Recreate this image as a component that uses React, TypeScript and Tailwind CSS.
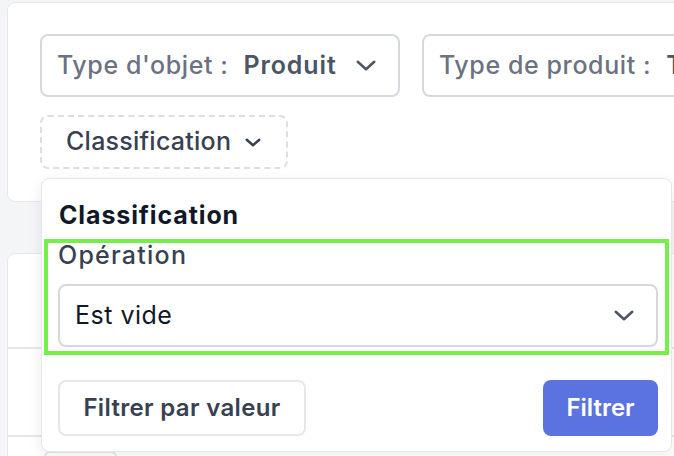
import React from "react";

function Chevron({ w = 20, h = 11, stroke = 2.5, color = "#4b5563" }: { w?: number; h?: number; stroke?: number; color?: string }) {
  return (
    <svg width={w} height={h} viewBox={`0 0 ${w} ${h}`} fill="none" className="shrink-0">
      <polyline
        points={`${stroke / 2 + 0.5},${stroke / 2 + 0.5} ${w / 2},${h - stroke / 2 - 0.5} ${w - stroke / 2 - 0.5},${stroke / 2 + 0.5}`}
        stroke={color}
        strokeWidth={stroke}
        strokeLinecap="round"
        strokeLinejoin="round"
      />
    </svg>
  );
}

function FilterSelect({ label, value, width }: { label: string; value: string; width: string }) {
  return (
    <div className={`${width} h-[63px] shrink-0 flex items-center overflow-hidden rounded-[8px] border-2 border-[#d5d8de] bg-white pl-[15px] pr-[21px]`}>
      <span className="text-[25px] tracking-[0.024em] font-medium text-[#6b7280] whitespace-nowrap">{label}</span>
      <span className="ml-[15px] text-[25px] tracking-[0.035em] font-semibold text-[#4b5563] whitespace-nowrap">{value}</span>
      <span className="ml-[19px]">
        <Chevron />
      </span>
    </div>
  );
}

export default function App() {
  return (
    <div className="relative w-[674px] h-[456px] overflow-hidden bg-[#f4f5f7] font-['Inter',sans-serif]">
      <div className="pl-[7px] pt-[2px]">
        {/* filters card */}
        <div className="w-[720px] h-[200px] rounded-[8px] border border-[#e5e7eb] bg-white pl-[32px] pt-[31px]">
          <div className="flex gap-[22px]">
            <FilterSelect label="Type d'objet :" value="Produit" width="w-[360px]" />
            <FilterSelect label="Type de produit :" value="Tout" width="w-[320px]" />
          </div>
          <div className="mt-[18px] flex h-[54px] w-[248px] items-center rounded-[8px] border-2 border-dashed border-[#dcdee3] pl-[24px]">
            <span className="text-[25px] tracking-[0.01em] font-medium text-[#374151]">Classification</span>
            <span className="ml-[14px]">
              <Chevron w={16} h={9} stroke={2.5} color="#374151" />
            </span>
          </div>
        </div>

        {/* table card behind */}
        <div className="mt-[51px] w-[720px] h-[260px] rounded-[8px] border border-[#e5e7eb] bg-white">
          <div className="h-[95px] border-b-2 border-[#e5e7eb]" />
          <div className="h-[88px] border-b-2 border-[#e5e7eb]" />
          <div className="ml-[36px] mt-[14px] h-[30px] w-[73px] rounded-[6px] border-2 border-[#e5e7eb]" />
        </div>
      </div>

      {/* popover */}
      <div className="absolute left-[41px] top-[178px] w-[631px] h-[274px] rounded-[8px] border border-[#e5e7eb] bg-white shadow-[0_4px_14px_rgba(17,24,39,0.08)]">
        <div className="pl-[17px] pt-[18px] h-[36px] box-content">
          <div className="text-[25px] tracking-[0.035em] leading-[36px] font-bold text-[#111827]">Classification</div>
        </div>
        <div className="mx-[2px] mt-[6px] border-4 border-[#76ee4c] pl-[10px] pr-[7px] pb-[4px]">
          <div className="text-[25px] tracking-[0.05em] leading-[24px] font-medium text-[#374151]">Opération</div>
          <div className="mt-[17px] flex h-[63px] items-center justify-between rounded-[8px] border-2 border-[#d5d8de] pl-[15px] pr-[22px]">
            <span className="text-[25px] tracking-[0.02em] text-[#111827]">Est vide</span>
            <Chevron />
          </div>
        </div>
        <div className="mt-[25px] flex justify-between pl-[16px] pr-[13px]">
          <button className="flex h-[56px] w-[248px] items-center justify-center rounded-[8px] border-2 border-[#e5e7eb] bg-white text-[24px] tracking-[0.014em] font-semibold text-[#374151]">
            Filtrer par valeur
          </button>
          <button className="flex h-[56px] w-[115px] items-center justify-center rounded-[8px] bg-[#5b73df] text-[24px] font-semibold text-white">
            Filtrer
          </button>
        </div>
      </div>
    </div>
  );
}
